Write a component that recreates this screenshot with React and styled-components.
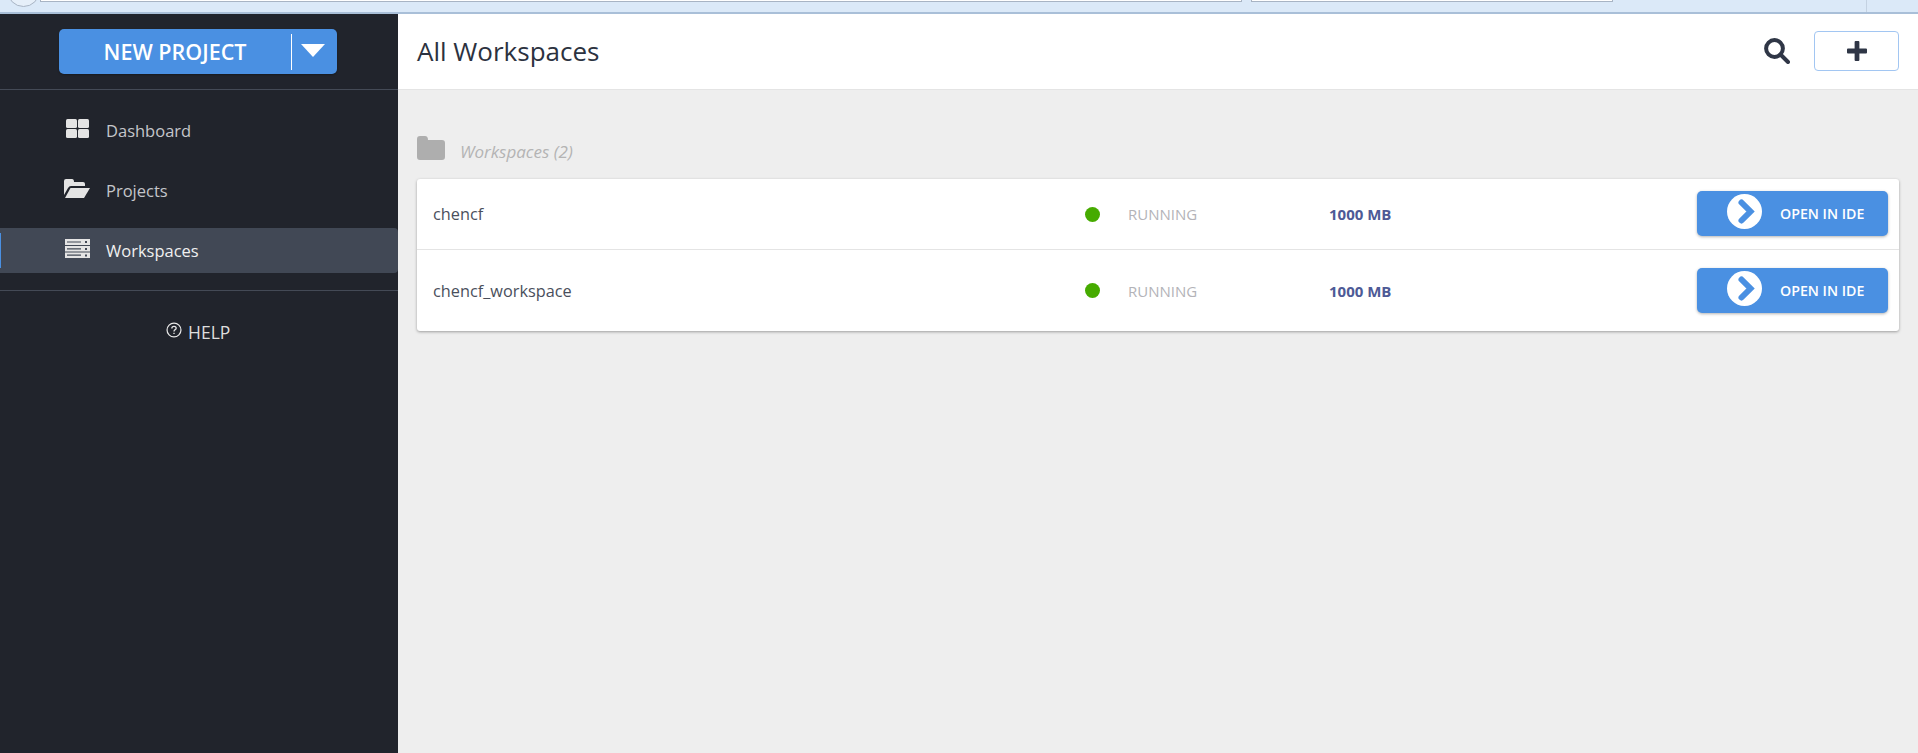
import React from "react";
import styled, { createGlobalStyle } from "styled-components";

const Global = createGlobalStyle`
  html, body { margin: 0; padding: 0; height: 100%; overflow: hidden; }
  #root { height: 100%; }
  * { box-sizing: border-box; }
  body { font-family: "Open Sans", "Noto Sans", sans-serif; background: #eee; }
`;

const Page = styled.div`
  width: 1918px;
  height: 753px;
  display: flex;
  flex-direction: column;
`;

const ChromeStrip = styled.div`
  height: 14px;
  flex: none;
  display: flex;
  background: #dbe9f8;
  border-bottom: 2px solid #a9bfd8;
  overflow: hidden;
`;

const BackCircle = styled.div`
  width: 33px;
  height: 33px;
  margin: -26px 0 0 7px;
  border-radius: 50%;
  border: 1px solid #a8b4c4;
  background: #e6eff9;
  flex: none;
`;

const UrlField = styled.div`
  height: 2px;
  width: ${(p) => p.$w}px;
  margin-left: ${(p) => p.$ml}px;
  background: #fff;
  border: 1px solid #a8b4c4;
  border-top: none;
  flex: none;
`;

const StripDivider = styled.div`
  width: 1px;
  height: 12px;
  margin-left: 253px;
  background: #c4d2e2;
  flex: none;
`;

const Body = styled.div`
  flex: 1;
  display: flex;
  min-height: 0;
`;

const Sidebar = styled.aside`
  width: 398px;
  flex: none;
  background: #21242c;
  display: flex;
  flex-direction: column;
`;

const SideTop = styled.div`
  height: 76px;
  flex: none;
  padding: 15px 0 0 59px;
  border-bottom: 1px solid #444a56;
`;

const NewProject = styled.div`
  width: 278px;
  height: 45px;
  background: #4a90e2;
  border-radius: 5px;
  display: flex;
  align-items: center;
  color: #fff;
  box-shadow: 0 1px 2px rgba(0, 0, 0, 0.3);
`;

const NewLabel = styled.span`
  width: 233px;
  height: 36px;
  flex: none;
  display: flex;
  align-items: center;
  justify-content: center;
  border-right: 1px solid #fff;
  font-size: 21.5px;
  font-weight: 600;
`;

const Caret = styled.span`
  margin-left: 9px;
  margin-top: -2px;
  width: 0;
  height: 0;
  border-left: 12px solid transparent;
  border-right: 12px solid transparent;
  border-top: 13px solid #fff;
`;

const Nav = styled.nav`
  padding-top: 18px;
  height: 201px;
  flex: none;
  display: flex;
  flex-direction: column;
  border-bottom: 1px solid #444a56;
`;

const NavItem = styled.div`
  position: relative;
  height: 45px;
  margin-bottom: 15px;
  flex: none;
  display: flex;
  align-items: center;
  padding-left: 64px;
  font-size: 16.5px;
  color: ${(p) => (p.$active ? "#f0f0f0" : "#c4c6ca")};
  background: ${(p) => (p.$active ? "#414855" : "transparent")};
  border-radius: ${(p) => (p.$active ? "0 4px 4px 0" : "0")};

  &::before {
    content: "";
    display: ${(p) => (p.$active ? "block" : "none")};
    position: absolute;
    left: 0;
    top: 5px;
    bottom: 5px;
    width: 1px;
    background: #4a90e2;
  }
`;

const NavIcon = styled.svg`
  width: 28px;
  height: 25px;
  margin-right: 14px;
  margin-top: -4px;
  flex: none;
  fill: #e4e4e4;
`;

const Help = styled.div`
  margin-top: 30px;
  padding-left: 166px;
  display: flex;
  align-items: center;
  gap: 6px;
  color: #dedede;
  font-size: 17.5px;
  line-height: 22px;
`;

const HelpIcon = styled.svg`
  width: 16px;
  height: 16px;
  margin-top: -5px;
  fill: none;
  stroke: #e8e8e8;
`;

const Main = styled.main`
  flex: 1;
  min-width: 0;
  display: flex;
  flex-direction: column;
  background: #eee;
`;

const Toolbar = styled.header`
  height: 76px;
  flex: none;
  background: #fff;
  border-bottom: 1px solid #e4e4e4;
  display: flex;
  align-items: center;
  padding: 0 19px;
`;

const Title = styled.h1`
  margin: 0 auto 1px 0;
  font-size: 26px;
  font-weight: 400;
  color: #2c3240;
`;

const SearchIcon = styled.svg`
  width: 26px;
  height: 26px;
  margin: -2px 24px 0 0;
  fill: none;
  stroke: #2f3646;
  stroke-width: 4;
`;

const AddButton = styled.div`
  width: 85px;
  height: 40px;
  margin-top: -1px;
  border: 1px solid #a2c6f2;
  border-radius: 4px;
  display: flex;
  align-items: center;
  justify-content: center;
`;

const PlusIcon = styled.svg`
  width: 20px;
  height: 20px;
  fill: #2f3646;
`;

const Content = styled.div`
  padding: 46px 18px 0 19px;
`;

const GroupHead = styled.div`
  height: 24px;
  display: flex;
  align-items: center;
  gap: 15px;
`;

const FolderIcon = styled.svg`
  width: 28px;
  height: 24px;
  fill: #aeaeae;
  flex: none;
`;

const GroupLabel = styled.span`
  font-size: 17px;
  font-style: italic;
  color: #b4b4b4;
  margin-top: 6px;
`;

const Card = styled.section`
  margin-top: 19px;
  width: 1482px;
  background: #fff;
  border-radius: 3px;
  box-shadow: 0 1px 3px rgba(0, 0, 0, 0.35);
`;

const Row = styled.div`
  height: ${(p) => p.$h}px;
  display: grid;
  grid-template-columns: 652px 43px 201px 1fr auto;
  align-items: center;
  padding: 0 11px 0 16px;
  border-bottom: ${(p) => (p.$last ? "none" : "1px solid #e4e4e4")};
`;

const Name = styled.span`
  font-size: 16.3px;
  color: #4a4f5c;
`;

const Dot = styled.span`
  width: 15px;
  height: 15px;
  border-radius: 50%;
  background: #46ab00;
`;

const Status = styled.span`
  font-size: 15px;
  color: #b3b3b8;
`;

const Size = styled.span`
  font-size: 15px;
  font-weight: 700;
  color: #4d5a96;
`;

const OpenButton = styled.div`
  width: 191px;
  height: 45px;
  margin-top: ${(p) => p.$mt}px;
  display: flex;
  align-items: center;
  padding-left: 30px;
  gap: 18px;
  background: #4a90e2;
  border-radius: 5px;
  color: #fff;
  font-size: 14.2px;
  font-weight: 600;
  box-shadow: 0 1px 3px rgba(0, 0, 0, 0.3);
`;

const ChevronDisc = styled.svg`
  width: 35px;
  height: 35px;
  flex: none;
  margin-top: -4px;
`;

const Chevron = () => (
  <ChevronDisc viewBox="0 0 35 35">
    <circle cx="17.5" cy="17.5" r="17.5" fill="#fff" />
    <path
      d="M14.5 8.5 L23.5 17.5 L14.5 26.5"
      fill="none"
      stroke="#4a90e2"
      strokeWidth="6"
      strokeLinecap="round"
    />
  </ChevronDisc>
);

const rows = [
  { name: "chencf", h: 71, mt: -2 },
  { name: "chencf_workspace", h: 81, mt: 0, last: true },
];

export default function App() {
  return (
    <Page>
      <Global />
      <ChromeStrip>
        <BackCircle />
        <UrlField $w={1202} $ml={0} />
        <UrlField $w={362} $ml={9} />
        <StripDivider />
      </ChromeStrip>
      <Body>
        <Sidebar>
          <SideTop>
            <NewProject>
              <NewLabel>NEW PROJECT</NewLabel>
              <Caret />
            </NewProject>
          </SideTop>
          <Nav>
            <NavItem>
              <NavIcon viewBox="0 0 28 25">
                <rect x="2" y="3" width="11" height="9" rx="1.5" />
                <rect x="14" y="3" width="11" height="9" rx="1.5" />
                <rect x="2" y="13" width="11" height="9" rx="1.5" />
                <rect x="14" y="13" width="11" height="9" rx="1.5" />
              </NavIcon>
              Dashboard
            </NavItem>
            <NavItem>
              <NavIcon viewBox="0 0 28 25">
                <path d="M0 5 Q0 3 2 3 H8 Q10 3 10 6 H19 Q21 6 21 8 V10 H7 Q5 10 4 12 L0 19 Z" />
                <path d="M6.5 12 H26 L20 22 H1 Z" />
              </NavIcon>
              Projects
            </NavItem>
            <NavItem $active>
              <NavIcon viewBox="0 0 28 25">
                <path fillRule="evenodd" d="M1 3 H26 V9 H1 Z M3 5.4 V6.6 H17 V5.4 Z M21 5 V7 H23 V5 Z" />
                <path fillRule="evenodd" d="M1 10 H26 V15.5 H1 Z M3 12.2 V13.4 H17 V12.2 Z M21 12 V14 H23 V12 Z" />
                <path fillRule="evenodd" d="M1 16.5 H26 V22 H1 Z M3 18.6 V19.8 H17 V18.6 Z M21 18.5 V20.5 H23 V18.5 Z" />
              </NavIcon>
              Workspaces
            </NavItem>
          </Nav>
          <Help>
            <HelpIcon viewBox="0 0 17 17">
              <circle cx="8.5" cy="8.5" r="7.4" strokeWidth="1.3" />
              <path d="M6.2 6.8 Q6.2 4.6 8.5 4.6 Q10.8 4.6 10.8 6.6 Q10.8 7.8 9.4 8.4 Q8.5 8.9 8.5 10.2" strokeWidth="1.4" />
              <path d="M8.5 11.4 V12.8" strokeWidth="1.4" />
            </HelpIcon>
            HELP
          </Help>
        </Sidebar>
        <Main>
          <Toolbar>
            <Title>All Workspaces</Title>
            <SearchIcon viewBox="0 0 26 26">
              <circle cx="10.5" cy="10.5" r="8.4" />
              <path d="M16.5 16.5 L24 24" strokeLinecap="round" />
            </SearchIcon>
            <AddButton>
              <PlusIcon viewBox="0 0 21 21">
                <path d="M8 1 Q8 0 9 0 H12 Q13 0 13 1 V8 H20 Q21 8 21 9 V12 Q21 13 20 13 H13 V20 Q13 21 12 21 H9 Q8 21 8 20 V13 H1 Q0 13 0 12 V9 Q0 8 1 8 H8 Z" />
              </PlusIcon>
            </AddButton>
          </Toolbar>
          <Content>
            <GroupHead>
              <FolderIcon viewBox="0 0 28 24">
                <path d="M0 3 Q0 0 3 0 H8 Q11 0 11 4 H25 Q28 4 28 7 V21 Q28 24 25 24 H3 Q0 24 0 21 Z" />
              </FolderIcon>
              <GroupLabel>Workspaces (2)</GroupLabel>
            </GroupHead>
            <Card>
              {rows.map((r) => (
                <Row key={r.name} $h={r.h} $last={r.last}>
                  <Name>{r.name}</Name>
                  <Dot />
                  <Status>RUNNING</Status>
                  <Size>1000 MB</Size>
                  <OpenButton $mt={r.mt}>
                    <Chevron />
                    OPEN IN IDE
                  </OpenButton>
                </Row>
              ))}
            </Card>
          </Content>
        </Main>
      </Body>
    </Page>
  );
}
